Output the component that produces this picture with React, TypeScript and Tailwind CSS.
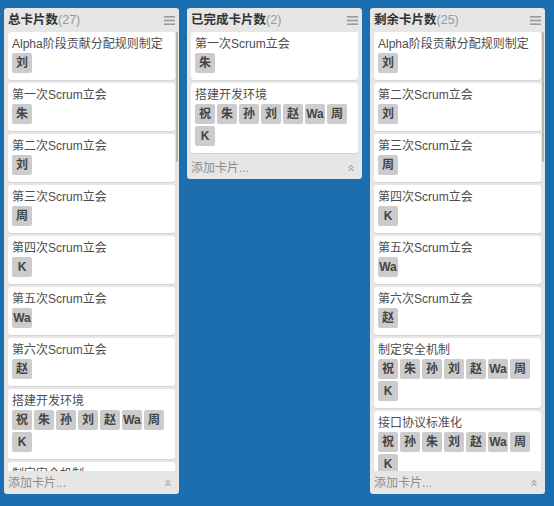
import { ChevronsUp } from "lucide-react";

type Card = { title: string; labels: string[] };

const all7 = ["祝", "朱", "孙", "刘", "赵", "Wa", "周", "K"];

const total: Card[] = [
  { title: "Alpha阶段贡献分配规则制定", labels: ["刘"] },
  { title: "第一次Scrum立会", labels: ["朱"] },
  { title: "第二次Scrum立会", labels: ["刘"] },
  { title: "第三次Scrum立会", labels: ["周"] },
  { title: "第四次Scrum立会", labels: ["K"] },
  { title: "第五次Scrum立会", labels: ["Wa"] },
  { title: "第六次Scrum立会", labels: ["赵"] },
  { title: "搭建开发环境", labels: all7 },
  { title: "制定安全机制", labels: all7 },
  { title: "接口协议标准化", labels: all7 },
];

const done: Card[] = [
  { title: "第一次Scrum立会", labels: ["朱"] },
  { title: "搭建开发环境", labels: all7 },
];

const left: Card[] = [
  { title: "Alpha阶段贡献分配规则制定", labels: ["刘"] },
  { title: "第二次Scrum立会", labels: ["刘"] },
  { title: "第三次Scrum立会", labels: ["周"] },
  { title: "第四次Scrum立会", labels: ["K"] },
  { title: "第五次Scrum立会", labels: ["Wa"] },
  { title: "第六次Scrum立会", labels: ["赵"] },
  { title: "制定安全机制", labels: all7 },
  { title: "接口协议标准化", labels: ["祝", "孙", "朱", "刘", "赵", "Wa", "周", "K"] },
  { title: "第七次Scrum立会", labels: ["K"] },
];

const MenuIcon = () => (
  <svg width="11" height="9" viewBox="0 0 11 9" className="text-[#9a9a9a]">
    <rect x="0" y="0" width="11" height="1.6" fill="currentColor" />
    <rect x="0" y="3.7" width="11" height="1.6" fill="currentColor" />
    <rect x="0" y="7.4" width="11" height="1.6" fill="currentColor" />
  </svg>
);

const CardItem = ({ card }: { card: Card }) => (
  <div className="mb-[3px] rounded-[3px] bg-white px-[4px] pt-[5px] pb-[7px] shadow-[0_1px_0_#d4d4d4]">
    <div className="h-[15px] text-[12px] leading-[15px] text-[#4d4d4d] whitespace-nowrap">
      {card.title}
    </div>
    <div className="mt-[1px] flex flex-wrap gap-[2px]">
      {card.labels.map((l, i) => (
        <span
          key={i}
          className="flex h-[20px] min-w-[20px] items-center justify-center rounded-[2px] bg-[#cccccc] text-[12px] font-bold leading-none text-[#444]"
        >
          {l}
        </span>
      ))}
    </div>
  </div>
);

const List = ({
  name,
  count,
  cards,
  scroll,
}: {
  name: string;
  count: number;
  cards: Card[];
  scroll?: boolean;
}) => (
  <div className="flex w-[175px] flex-col rounded-[3px] bg-[#e6e6e6]">
    <div className="flex h-[24px] items-center justify-between px-[4px]">
      <div className="text-[12.5px] leading-none">
        <span className="font-bold text-[#333]">{name}</span>
        <span className="text-[#999]">({count})</span>
      </div>
      <MenuIcon />
    </div>
    <div className={scroll ? "relative h-[439px] overflow-hidden" : "relative"}>
      <div className="px-[4px]">
        {cards.map((c, i) => (
          <CardItem key={i} card={c} />
        ))}
      </div>
      {scroll && (
        <div className="absolute top-0 right-[1px] h-[130px] w-[2px] rounded-full bg-[#bfb4a8]" />
      )}
    </div>
    <div className="flex h-[23px] items-center justify-between px-[4px] text-[12px] text-[#8c8c8c]">
      <span>添加卡片...</span>
      <ChevronsUp size={10} strokeWidth={3} className="mr-[2px] text-[#b0b0b0]" />
    </div>
  </div>
);

export default function App() {
  return (
    <div
      className="h-[506px] w-[554px] overflow-hidden bg-[#1c6fae] pt-[8px] pl-[4px]"
      style={{ fontFamily: '"Liberation Sans", "Noto Sans CJK SC", sans-serif' }}
    >
      <div className="flex items-start gap-[8px]">
        <List name="总卡片数" count={27} cards={total} scroll />
        <List name="已完成卡片数" count={2} cards={done} />
        <List name="剩余卡片数" count={25} cards={left} scroll />
      </div>
    </div>
  );
}
